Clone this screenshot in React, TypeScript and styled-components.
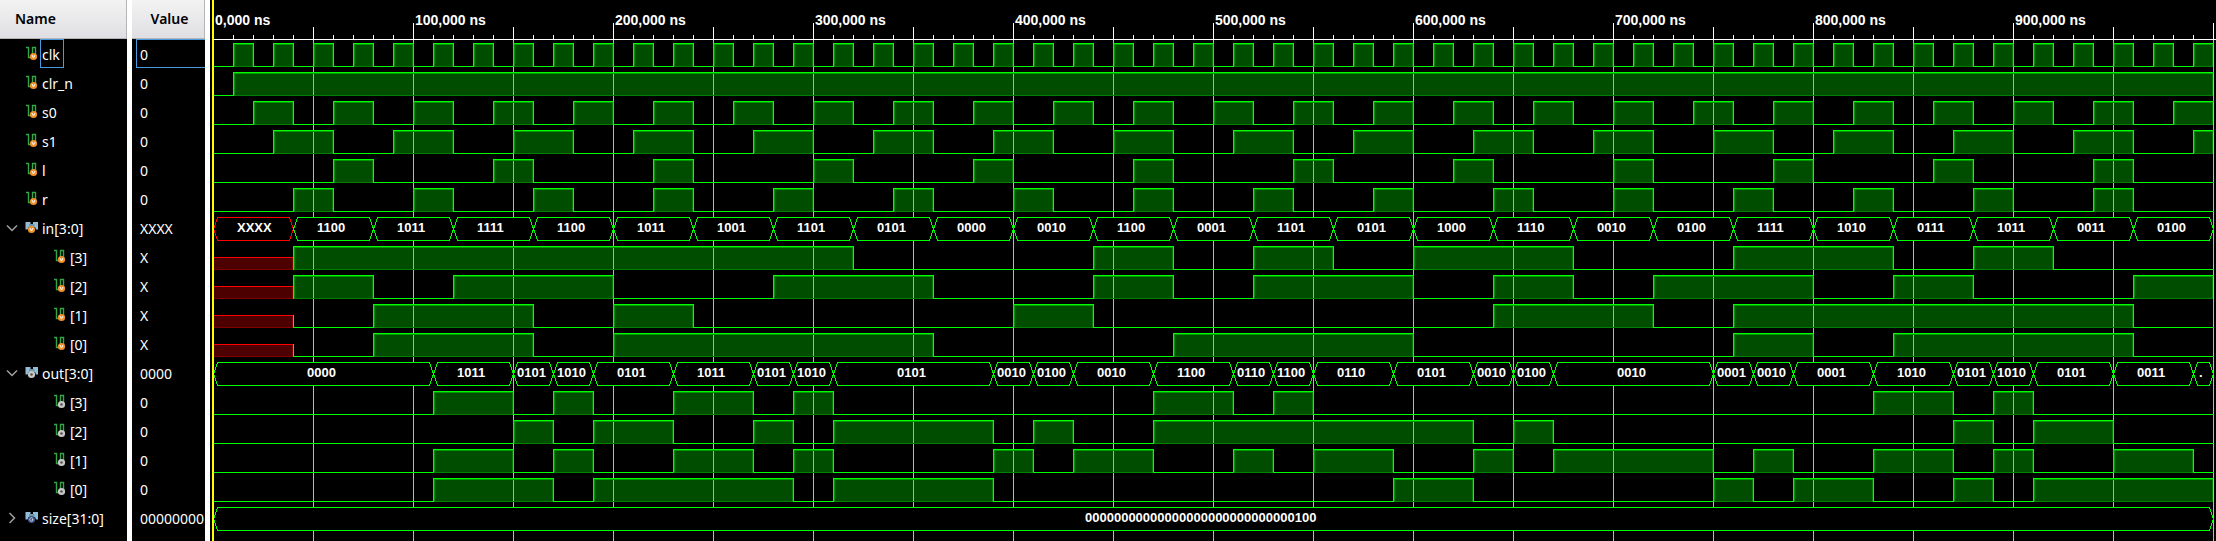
import React from "react";
import styled, { createGlobalStyle } from "styled-components";

const ROW = 29;
const HEADER = 39;
const PX_PER_NS = 2;
const END = 1000;
const GREEN = "#00ff00";

type Segment = { from: number; to: number; value: string };
type Marker = "input" | "output" | "constant";
type Signal = {
  name: string;
  value: string;
  marker: Marker;
  depth?: number;
  bus?: boolean;
  expanded?: boolean;
  selected?: boolean;
  segments: Segment[];
};

const Global = createGlobalStyle`
  html, body, #root { height: 100%; }
  body { margin: 0; background: #000; overflow: hidden; }
`;

const Viewer = styled.main`
  display: flex;
  min-height: 100%;
  background: #000;
  color: #fff;
  font-family: "Noto Sans", "Open Sans", sans-serif;
  font-size: 14px;
`;

const Pane = styled.section<{ $width: number }>`
  flex: 0 0 ${(p) => p.$width}px;
  box-sizing: border-box;
  overflow: hidden;
`;

const Splitter = styled.div`
  flex: 0 0 5px;
  background: #fff;
`;

const PaneHeader = styled.h2<{ $center?: boolean }>`
  box-sizing: border-box;
  height: ${HEADER}px;
  margin: 0;
  padding: 0 12px 0 15px;
  border-right: 1px solid #b4b4b4;
  border-bottom: 1px solid #b4b4b4;
  background: linear-gradient(#f3f3f3, #dfdfe3);
  color: #000;
  font-size: 14px;
  font-weight: 600;
  line-height: 37px;
  text-align: ${(p) => (p.$center ? "center" : "left")};
`;

const List = styled.ul`
  margin: 0;
  padding: 0;
  list-style: none;
`;

const NameRow = styled.li<{ $depth: number }>`
  display: flex;
  align-items: center;
  height: ${ROW}px;
  padding-left: ${(p) => 4 + p.$depth * 28}px;
`;

const Expander = styled.button`
  display: flex;
  align-items: center;
  justify-content: center;
  width: 16px;
  height: 16px;
  margin: 0 4px 0 0;
  padding: 0;
  border: 0;
  background: none;
`;

const ExpanderGap = styled.span`
  width: 20px;
`;

const Label = styled.span<{ $selected?: boolean }>`
  box-sizing: border-box;
  height: ${ROW}px;
  margin-left: 2px;
  padding: 0 3px 0 1px;
  border: 1px solid ${(p) => (p.$selected ? "#4a9ae0" : "transparent")};
  line-height: 30px;
  white-space: nowrap;
`;

const ValueRow = styled.li<{ $selected?: boolean }>`
  box-sizing: border-box;
  height: ${ROW}px;
  margin-left: 4px;
  padding-left: 3px;
  border: 1px solid ${(p) => (p.$selected ? "#4a9ae0" : "transparent")};
  border-right: 0;
  line-height: 30px;
  white-space: nowrap;
`;

const WavePane = styled.section`
  flex: 1 1 0;
  min-width: 0;
  display: flex;
  flex-direction: column;
  position: relative;
  margin-left: 2px;
  overflow: hidden;
`;

const Cursor = styled.div`
  position: absolute;
  inset: 0 auto 0 0;
  width: 2px;
  background: #ffff00;
`;

const Tracks = styled.div`
  flex: 1;
  background: repeating-linear-gradient(to right, #b8b8b8 0 1px, transparent 1px 100px) 1px 0;
`;

const Drawing = styled.svg`
  display: block;
  width: 100%;
  overflow: hidden;
  shape-rendering: crispEdges;
`;

const TimeText = styled.text`
  fill: #fff;
  font: bold 14px "Liberation Sans", Arial, sans-serif;
`;

const BusText = styled.text`
  fill: #fff;
  font: bold 13px "Liberation Sans", Arial, sans-serif;
`;

const xAt = (ns: number) => 1 + ns * PX_PER_NS;

/* Builds a one-bit signal that is high for `width` ns, every `period` ns. */
const pulses = (first: number, width: number, period: number): Segment[] => {
  const out: Segment[] = [{ from: 0, to: first, value: "0" }];
  for (let t = first; t < END; t += period) {
    out.push({ from: t, to: Math.min(t + width, END), value: "1" });
    if (t + width < END) out.push({ from: t + width, to: Math.min(t + period, END), value: "0" });
  }
  return out;
};

/* Builds a bus from "end:value" pairs. */
const timeline = (text: string): Segment[] => {
  let from = 0;
  return text.split(" ").map((item) => {
    const [end, value] = item.split(":");
    const segment = { from, to: Number(end), value };
    from = segment.to;
    return segment;
  });
};

/* Extracts one bit of a bus and joins equal neighbours. */
const bitOf = (bus: Segment[], bit: number): Segment[] =>
  bus.reduce<Segment[]>((acc, s) => {
    const value = s.value[s.value.length - 1 - bit];
    const last = acc[acc.length - 1];
    if (last && last.value === value) last.to = s.to;
    else acc.push({ from: s.from, to: s.to, value });
    return acc;
  }, []);

const IN = timeline(
  "XXXX 1100 1011 1111 1100 1011 1001 1101 0101 0000 0010 1100 0001 1101 0101 1000 1110 0010 0100 1111 1010 0111 1011 0011 0100"
    .split(" ")
    .map((v, i) => `${(i + 1) * 40}:${v}`)
    .join(" "),
);

const OUT = timeline(
  "110:0000 150:1011 170:0101 190:1010 230:0101 270:1011 290:0101 310:1010 390:0101 410:0010 430:0100 470:0010 " +
    "510:1100 530:0110 550:1100 590:0110 630:0101 650:0010 670:0100 750:0010 770:0001 790:0010 830:0001 870:1010 " +
    "890:0101 910:1010 950:0101 990:0011 1000:0001",
);

const bits = (bus: Segment[], value: string, marker: Marker): Signal[] =>
  [3, 2, 1, 0].map((n) => ({ name: `[${n}]`, value, marker, depth: 1, segments: bitOf(bus, n) }));

const SIGNALS: Signal[] = [
  { name: "clk", value: "0", marker: "input", selected: true, segments: pulses(10, 10, 20) },
  { name: "clr_n", value: "0", marker: "input", segments: pulses(10, 990, 1000) },
  { name: "s0", value: "0", marker: "input", segments: pulses(20, 20, 40) },
  { name: "s1", value: "0", marker: "input", segments: pulses(30, 30, 60) },
  { name: "l", value: "0", marker: "input", segments: pulses(60, 20, 80) },
  { name: "r", value: "0", marker: "input", segments: pulses(40, 20, 60) },
  { name: "in[3:0]", value: "XXXX", marker: "input", bus: true, expanded: true, segments: IN },
  ...bits(IN, "X", "input"),
  { name: "out[3:0]", value: "0000", marker: "output", bus: true, expanded: true, segments: OUT },
  ...bits(OUT, "0", "output"),
  {
    name: "size[31:0]",
    value: "00000000",
    marker: "constant",
    bus: true,
    segments: [{ from: 0, to: END, value: "00000000000000000000000000000100" }],
  },
];

const BADGE: Record<Marker, string> = { input: "#f0902a", output: "#c8c8c8", constant: "#3f5484" };

function Badge({ marker, x, y }: { marker: Marker; x: number; y: number }) {
  return (
    <g>
      <circle cx={x} cy={y} r="3.6" fill={BADGE[marker]} />
      {marker === "input" && (
        <path d={`M${x - 1.5} ${y - 1.5}L${x} ${y + 1.5}L${x + 1.5} ${y - 1.5}`} fill="none" stroke="#fff" />
      )}
      {marker === "output" && <circle cx={x} cy={y} r="1.3" fill="#555" />}
      {marker === "constant" && (
        <path
          d={`M${x + 1.3} ${y - 1.2}A1.7 1.7 0 1 0 ${x + 1.5} ${y + 0.8}V${y}H${x + 0.3}`}
          fill="none"
          stroke="#dde4f5"
          strokeWidth="0.8"
        />
      )}
    </g>
  );
}

function SignalIcon({ marker, bus }: { marker: Marker; bus?: boolean }) {
  return (
    <svg width="14" height="17" viewBox="0 0 14 17" aria-hidden="true">
      {bus ? (
        <>
          <path d="M1.5 3H6.5V5H9V3H14V10.5H12L11 8H4.5L3.5 10.5H1.5Z" fill="#93bdd6" />
          <path d="M5 5H10.5V8H5Z" fill="#6f98ae" />
          <Badge marker={marker} x={7.5} y={10.5} />
        </>
      ) : (
        <>
          <path d="M2 2.5H4.5V12.5H8.5V2.5H11.5V10" fill="none" stroke="#35a548" strokeWidth="1.4" />
          <Badge marker={marker} x={9.5} y={11.5} />
        </>
      )}
    </svg>
  );
}

function BitWave({ segments }: { segments: Segment[] }) {
  return (
    <>
      {segments.map((s, i) => {
        const a = xAt(s.from);
        const w = (s.to - s.from) * PX_PER_NS;
        const joined = i > 0;
        if (s.value === "X")
          return (
            <g key={s.from}>
              <rect x={a + 1} y="15" width={w - 1} height="12" fill="#ff0000" fillOpacity="0.3" />
              <rect x={a + 1} y="26" width={w - 1} height="1" fill="#800000" />
              <rect x={a + w - 1} y="15" width="1" height="12" fill="#800000" />
              <rect x={a} y="14" width={w} height="1" fill="#ff0000" />
            </g>
          );
        if (s.value === "1")
          return (
            <g key={s.from}>
              <rect x={a} y="3" width={w} height="24" fill={GREEN} fillOpacity="0.3" />
              <rect x={a} y="26" width={w} height="1" fill="#008000" />
              <rect x={a + 1} y="4" width="1" height="22" fill="#009900" />
              <rect x={a + w - 1} y="4" width="1" height="22" fill="#008000" />
              <rect x={a + 1} y="4" width={w - 1} height="1" fill="#009900" />
              <rect x={a} y="3" width={w + 1} height="1" fill={GREEN} />
              {joined && <rect x={a} y="3" width="1" height="24" fill={GREEN} />}
            </g>
          );
        const afterX = joined && segments[i - 1].value === "X";
        return (
          <g key={s.from}>
            <rect x={a} y="26" width={w + 1} height="1" fill={GREEN} />
            {joined && <rect x={a} y={afterX ? 14 : 3} width="1" height={afterX ? 13 : 24} fill={GREEN} />}
          </g>
        );
      })}
    </>
  );
}

/* Bus labels start from the middle of their segment, less half of an 8px cell per character. */
function BusWave({ segments }: { segments: Segment[] }) {
  return (
    <>
      {segments.map((s) => {
        const a = xAt(s.from);
        const b = xAt(s.to);
        const label = b - a < 34 ? "." : s.value;
        return (
          <g key={s.from}>
            <path
              d={`M${a + 0.5} 15L${a + 4.5} 3.5H${b - 3.5}L${b + 0.5} 15L${b - 3.5} 26.5H${a + 4.5}Z`}
              fill="#000"
              stroke={s.value.includes("X") ? "#ff0000" : GREEN}
            />
            <BusText x={(a + b) / 2 - 4 * label.length} y="18">
              {label}
            </BusText>
          </g>
        );
      })}
    </>
  );
}

function Ruler() {
  const ticks = Array.from({ length: END / 10 + 1 }, (_, i) => i * 10);
  return (
    <Drawing height={HEADER + 1} role="img" aria-label="Time ruler">
      <rect x="0" y={HEADER} width="100%" height="1" fill="#fff" />
      {ticks.map((t) => {
        const top = t % 100 === 0 ? 23 : t % 50 === 0 ? 27 : 35;
        return <rect key={t} x={xAt(t)} y={top} width="1" height={HEADER - top} fill="#fff" />;
      })}
      {ticks
        .filter((t) => t % 100 === 0 && t < END)
        .map((t) => (
          <TimeText key={t} x={xAt(t) + 2} y="25">
            {`${t},000 ns`}
          </TimeText>
        ))}
    </Drawing>
  );
}

export default function App() {
  return (
    <>
      <Global />
      <Viewer>
        <Pane $width={127}>
          <PaneHeader>Name</PaneHeader>
          <List>
            {SIGNALS.map((s, i) => (
              <NameRow key={i} $depth={s.depth ?? 0}>
                {s.bus ? (
                  <Expander type="button" aria-label={s.name} aria-expanded={!!s.expanded}>
                    <svg width="12" height="12" viewBox="0 0 12 12" fill="none" stroke="#a0a0a0" strokeWidth="1.5">
                      <path d={s.expanded ? "M1 3.5L6 8.5L11 3.5" : "M3.5 1L8.5 6L3.5 11"} />
                    </svg>
                  </Expander>
                ) : (
                  <ExpanderGap />
                )}
                <SignalIcon marker={s.marker} bus={s.bus} />
                <Label $selected={s.selected}>{s.name}</Label>
              </NameRow>
            ))}
          </List>
        </Pane>
        <Splitter />
        <Pane $width={73}>
          <PaneHeader $center>Value</PaneHeader>
          <List>
            {SIGNALS.map((s, i) => (
              <ValueRow key={i} $selected={s.selected}>
                {s.value}
              </ValueRow>
            ))}
          </List>
        </Pane>
        <Splitter />
        <WavePane>
          <Ruler />
          <Tracks>
            {SIGNALS.map((s, i) => (
              <Drawing key={i} height={ROW} role="img" aria-label={`${s.name} waveform`}>
                {s.bus ? <BusWave segments={s.segments} /> : <BitWave segments={s.segments} />}
              </Drawing>
            ))}
          </Tracks>
          <Cursor />
        </WavePane>
      </Viewer>
    </>
  );
}
